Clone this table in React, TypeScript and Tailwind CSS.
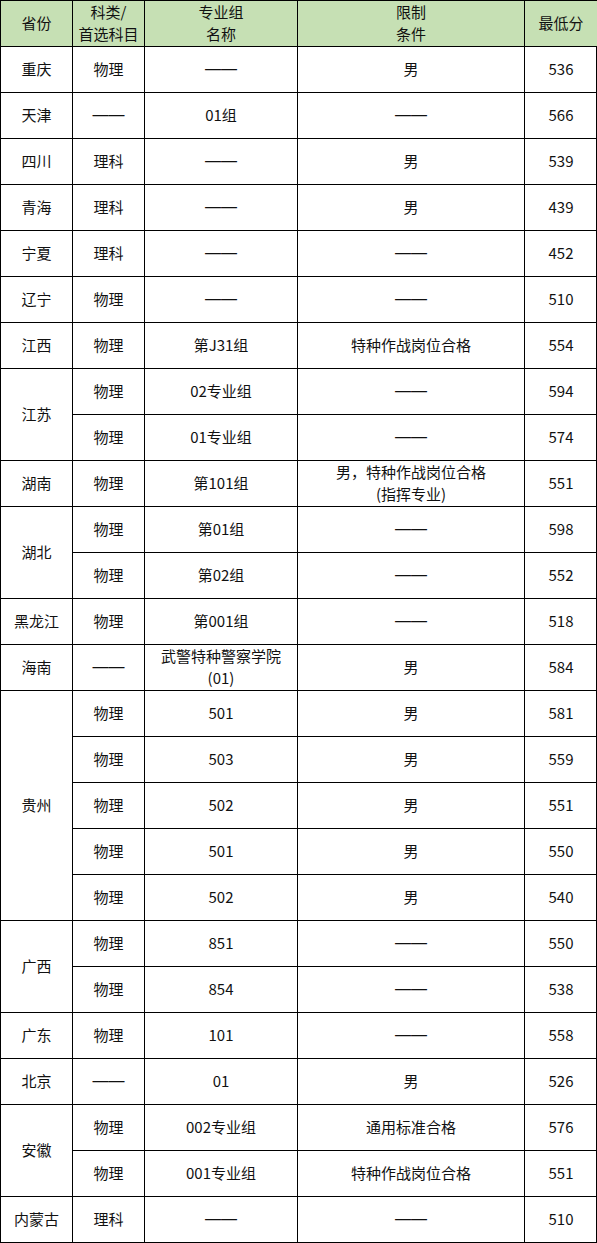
type Row = {
  province?: string;
  span?: number;
  subject: string;
  group: string;
  limit: string;
  score: string;
};

const DASH = '——';

const ROWS: Row[] = [
  { province: '重庆', subject: '物理', group: DASH, limit: '男', score: '536' },
  { province: '天津', subject: DASH, group: '01组', limit: DASH, score: '566' },
  { province: '四川', subject: '理科', group: DASH, limit: '男', score: '539' },
  { province: '青海', subject: '理科', group: DASH, limit: '男', score: '439' },
  { province: '宁夏', subject: '理科', group: DASH, limit: DASH, score: '452' },
  { province: '辽宁', subject: '物理', group: DASH, limit: DASH, score: '510' },
  { province: '江西', subject: '物理', group: '第J31组', limit: '特种作战岗位合格', score: '554' },
  { province: '江苏', span: 2, subject: '物理', group: '02专业组', limit: DASH, score: '594' },
  { subject: '物理', group: '01专业组', limit: DASH, score: '574' },
  { province: '湖南', subject: '物理', group: '第101组', limit: '男，特种作战岗位合格\n(指挥专业)', score: '551' },
  { province: '湖北', span: 2, subject: '物理', group: '第01组', limit: DASH, score: '598' },
  { subject: '物理', group: '第02组', limit: DASH, score: '552' },
  { province: '黑龙江', subject: '物理', group: '第001组', limit: DASH, score: '518' },
  { province: '海南', subject: DASH, group: '武警特种警察学院\n(01)', limit: '男', score: '584' },
  { province: '贵州', span: 5, subject: '物理', group: '501', limit: '男', score: '581' },
  { subject: '物理', group: '503', limit: '男', score: '559' },
  { subject: '物理', group: '502', limit: '男', score: '551' },
  { subject: '物理', group: '501', limit: '男', score: '550' },
  { subject: '物理', group: '502', limit: '男', score: '540' },
  { province: '广西', span: 2, subject: '物理', group: '851', limit: DASH, score: '550' },
  { subject: '物理', group: '854', limit: DASH, score: '538' },
  { province: '广东', subject: '物理', group: '101', limit: DASH, score: '558' },
  { province: '北京', subject: DASH, group: '01', limit: '男', score: '526' },
  { province: '安徽', span: 2, subject: '物理', group: '002专业组', limit: '通用标准合格', score: '576' },
  { subject: '物理', group: '001专业组', limit: '特种作战岗位合格', score: '551' },
  { province: '内蒙古', subject: '理科', group: DASH, limit: DASH, score: '510' },
];

const SPAN_CLASSES: Record<number, string> = {
  1: 'row-span-1',
  2: 'row-span-2',
  5: 'row-span-5',
};

function Cell({ text, className = '' }: { text: string; className?: string }) {
  return (
    <div
      className={`flex flex-col items-center justify-center border-l border-t border-black pb-px text-center leading-[22px] ${className}`}
    >
      {text === DASH ? (
        // 破折号用 Arial 宽度，线条连贯且和原图一样长
        <span className="font-['Liberation_Sans',sans-serif] text-[16px] leading-none">{DASH}</span>
      ) : (
        text.split('\n').map((line) => <span key={line}>{line}</span>)
      )}
    </div>
  );
}

export default function App() {
  return (
    <div className="min-h-screen bg-white">
      <div
        className="grid w-[597px] auto-rows-[46px] grid-cols-[72px_72px_153px_227px_73px] border-b border-r border-black text-[15px] text-[#111]"
        style={{ fontFamily: '"Noto Sans CJK SC", "Noto Sans", sans-serif' }}
      >
        <Cell text="省份" className="bg-[#c6e0b4]" />
        <Cell text={'科类/\n首选科目'} className="bg-[#c6e0b4]" />
        <Cell text={'专业组\n名称'} className="bg-[#c6e0b4]" />
        <Cell text={'限制\n条件'} className="bg-[#c6e0b4]" />
        <Cell text="最低分" className="bg-[#c6e0b4]" />

        {ROWS.map((row, i) => (
          <div key={i} className="contents">
            {row.province && <Cell text={row.province} className={SPAN_CLASSES[row.span ?? 1]} />}
            <Cell text={row.subject} />
            <Cell text={row.group} />
            <Cell text={row.limit} />
            <Cell text={row.score} />
          </div>
        ))}
      </div>
    </div>
  );
}
